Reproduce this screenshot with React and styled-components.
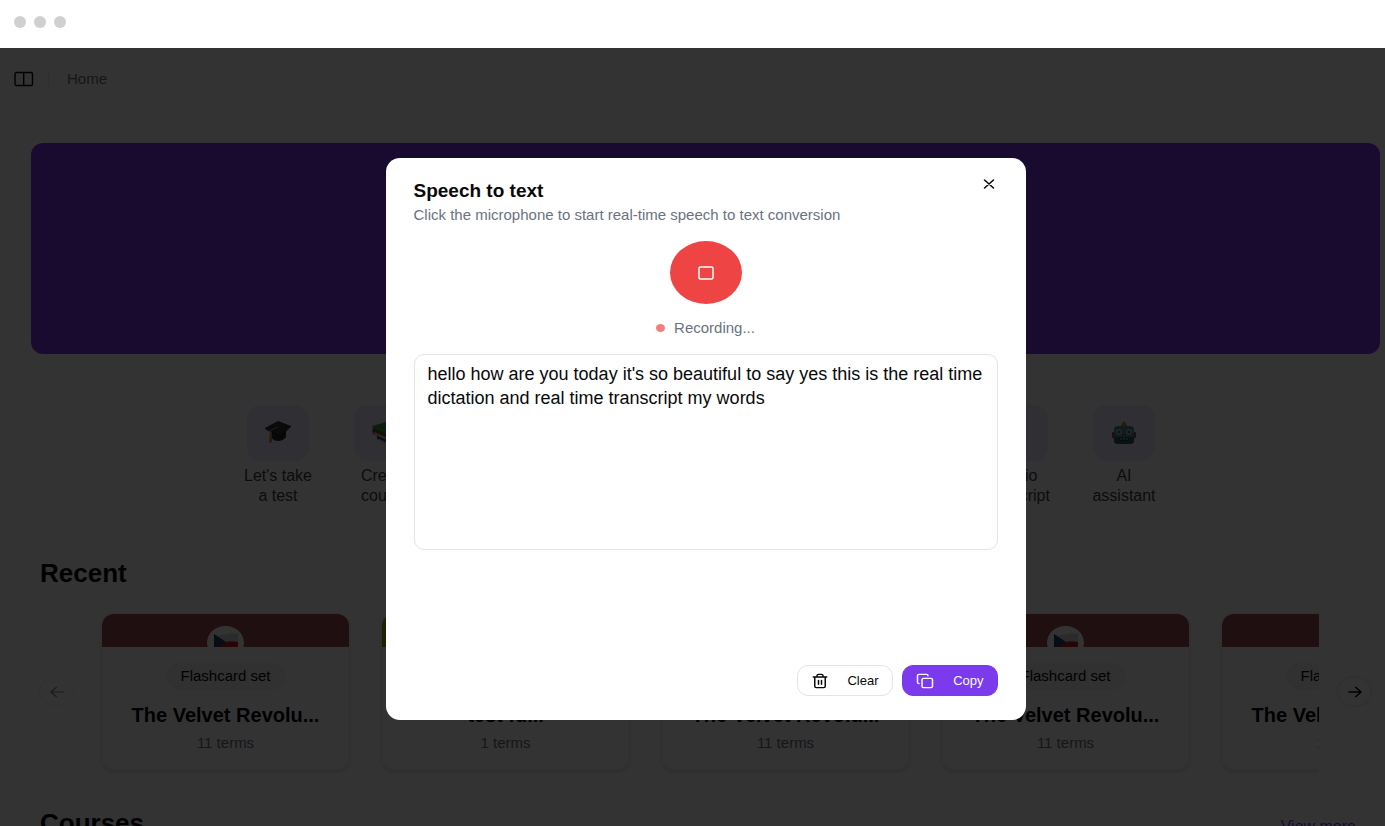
import React from "react";
import styled, { createGlobalStyle } from "styled-components";

const GlobalStyle = createGlobalStyle`
  *, *::before, *::after { box-sizing: border-box; }
  body {
    margin: 0;
    background: #fff;
    color: #09090b;
    font-family: "Liberation Sans", Arial, Helvetica, sans-serif;
    font-size: 15px;
    line-height: 20px;
  }
  h1, h2, h3, p { margin: 0; }
  button, textarea { font-family: inherit; color: inherit; }
`;

const Window = styled.div`
  display: flex;
  flex-direction: column;
  height: 100vh;
  overflow: hidden;
`;

const TitleBar = styled.div`
  display: flex;
  flex: none;
  gap: 8px;
  height: 48px;
  padding: 16px 14px;
`;

const Dot = styled.span`
  width: 12px;
  height: 12px;
  border-radius: 50%;
  background: #d0d0d0;
`;

const Screen = styled.div`
  position: relative;
  flex: 1;
  min-height: 0;
  overflow: hidden;
`;

const Header = styled.header`
  display: flex;
  align-items: center;
  height: 62px;
  padding: 0 14px;
  border-bottom: 1px solid #f4f4f5;
`;

const IconButton = styled.button`
  display: grid;
  place-items: center;
  padding: 0;
  border: 0;
  background: none;
`;

const Divider = styled.span`
  width: 1px;
  height: 16px;
  margin: 0 18px 0 14px;
  background: #e4e4e7;
`;

const Crumb = styled.a`
  color: #71717a;
  text-decoration: none;
`;

const Content = styled.main`
  padding: 33px 5px 0 31px;
`;

const Banner = styled.div`
  height: 211px;
  border-radius: 12px;
  background: #7c3aed;
`;

const Actions = styled.nav`
  display: flex;
  justify-content: center;
  padding: 51px 9px 0 0;
`;

const ActionRow = styled.div`
  display: flex;
  flex: 0 1 922px;
  justify-content: space-between;
`;

const ActionGroup = styled.div`
  display: flex;
  gap: 31px;
`;

const Action = styled.a`
  display: flex;
  flex-direction: column;
  align-items: center;
  gap: 5px;
  color: #3f3f46;
  font-size: 16px;
  text-align: center;
  text-decoration: none;
`;

const Tile = styled.span`
  display: grid;
  place-items: center;
  width: 62px;
  height: 56px;
  border-radius: 14px;
  background: #ede9fe;
`;

const ActionLabel = styled.span`
  width: 76px;
`;

const SectionHead = styled.div`
  display: flex;
  justify-content: space-between;
  align-items: flex-end;
  padding: 0 24px 0 9px;
`;

const SectionTitle = styled.h2`
  font-size: 26px;
  line-height: 32px;
`;

const MoreLink = styled.a`
  color: #7c3aed;
  font-size: 16px;
  line-height: 24px;
  text-decoration: none;
`;

const Section = styled.section`
  padding-top: ${(p) => p.$top}px;
`;

const Carousel = styled.div`
  display: flex;
  align-items: center;
  justify-content: space-between;
  padding: 13px 8px 0;
`;

const ArrowButton = styled.button`
  display: grid;
  flex: none;
  place-items: center;
  width: 35px;
  height: 31px;
  padding: 0;
  border: 1px solid #e4e4e7;
  border-radius: 50%;
  background: #fff;
  opacity: ${(p) => (p.disabled ? 0.5 : 1)};
`;

const Viewport = styled.div`
  display: flex;
  flex: 1;
  gap: 33px;
  margin: 0 18px 0 16px;
  padding: 12px 0 12px 12px;
  overflow: hidden;
`;

const Card = styled.article`
  display: flex;
  flex: none;
  flex-direction: column;
  align-items: center;
  width: 247px;
  height: 155px;
  border-radius: 12px;
  background: #fff;
  box-shadow: 0 0 0 1px #f0f0f2, 0 2px 5px rgba(0, 0, 0, 0.18);
  overflow: hidden;
`;

const CardTop = styled.div`
  display: flex;
  justify-content: center;
  width: 100%;
  height: 33px;
  padding-top: 12px;
  background: ${(p) => p.$color};
  overflow: hidden;
`;

const Avatar = styled.div`
  display: flex;
  flex: none;
  justify-content: center;
  width: 37px;
  height: 33px;
  padding-top: 7px;
  border-radius: 50%;
  background: #fff;
`;

const Badge = styled.span`
  height: 27px;
  margin-top: 16px;
  padding: 0 14px;
  border-radius: 14px;
  background: #f4f4f5;
  font-size: 15px;
  line-height: 26px;
`;

const CardTitle = styled.h3`
  margin-top: 13px;
  font-size: 20px;
  line-height: 24px;
`;

const CardMeta = styled.p`
  margin-top: 6px;
  color: #71717a;
`;

const Overlay = styled.div`
  position: absolute;
  inset: 0;
  display: flex;
  align-items: center;
  justify-content: center;
  padding: 4px 0 0 26px;
  background: rgba(0, 0, 0, 0.8);
`;

const Dialog = styled.div`
  display: flex;
  flex-direction: column;
  width: 640px;
  min-height: 562px;
  padding: 18px 28px 24px;
  border-radius: 14px;
  background: #fff;
`;

const DialogHead = styled.div`
  display: flex;
  justify-content: space-between;
  align-items: flex-start;
`;

const DialogTitle = styled.h1`
  font-size: 19px;
  line-height: 29px;
`;

const Description = styled.p`
  color: #6b7280;
`;

const Recorder = styled.div`
  display: flex;
  flex-direction: column;
  align-items: center;
  gap: 14px;
  padding-top: 16px;
`;

const RecordButton = styled.button`
  display: grid;
  place-items: center;
  width: 72px;
  height: 63px;
  padding: 0;
  border: 0;
  border-radius: 50%;
  background: #ef4444;
`;

const Status = styled.p`
  display: flex;
  align-items: center;
  gap: 9px;
  color: #6b7280;
`;

const Pulse = styled.span`
  width: 9px;
  height: 8px;
  border-radius: 50%;
  background: #f47c7c;
`;

const Transcript = styled.textarea`
  display: block;
  width: 100%;
  height: 196px;
  margin-top: 16px;
  padding: 7px 12px 8px 13px;
  border: 1px solid #e4e4e7;
  border-radius: 10px;
  outline: 0;
  background: #fff;
  font-size: 18px;
  line-height: 24px;
  resize: none;
  overflow: hidden;
`;

const DialogActions = styled.div`
  display: flex;
  justify-content: flex-end;
  gap: 9px;
  margin-top: auto;
`;

const ActionButton = styled.button`
  display: flex;
  align-items: center;
  justify-content: space-between;
  width: 96px;
  height: 31px;
  padding: 0 13px;
  border: 1px solid ${(p) => (p.$primary ? "#7c3aed" : "#e4e4e7")};
  border-radius: 11px;
  background: ${(p) => (p.$primary ? "#7c3aed" : "#fff")};
  color: ${(p) => (p.$primary ? "#fafafa" : "#09090b")};
  font-size: 13px;
`;

function LineIcon({ width, height, stroke = 2, children }) {
  return (
    <svg width={width} height={height} viewBox="0 0 24 24" preserveAspectRatio="none" fill="none"
      stroke="currentColor" strokeWidth={stroke} strokeLinecap="round" strokeLinejoin="round" aria-hidden="true">
      {children}
    </svg>
  );
}

const GraduationCap = () => (
  <svg width="26" height="24" viewBox="0 0 26 24" aria-hidden="true">
    <path d="M7 10v7c2 4 11 4 14-1v-6z" fill="#26282b" />
    <path d="M0 7 13 0l13 5-11 10z" fill="#303338" />
    <path d="M0 7l15 8 11-10v1L15 16 0 8z" fill="#111" />
    <path d="M13 6 6 9l-1 4" fill="none" stroke="#c98a2a" strokeWidth="1" />
    <path d="M5 12h2v9l-3 1z" fill="#c98a2a" />
  </svg>
);

const Books = () => (
  <svg width="27" height="23" viewBox="0 0 27 23" aria-hidden="true">
    <path d="M5 13l12-4 9 6-13 7-8-5z" fill="#2f4f90" />
    <path d="M7 17l6 3 13-6v2l-13 6-7-4z" fill="#d8d8d8" />
    <path d="M0 8l15-5 10 6-12 8L1 12z" fill="#b8362c" />
    <path d="M2 10l11 5 12-6v2l-12 6-11-5z" fill="#d8d2c6" />
    <path d="M0 4l14-4 11 5-12 7L1 7z" fill="#3d9a3c" />
    <path d="M1 6l12 5v2L1 8z" fill="#1e6c28" />
  </svg>
);

const Robot = () => (
  <svg width="26" height="24" viewBox="0 0 26 24" aria-hidden="true">
    <path d="M10 5a3 3 0 0 1 6 0z" fill="#c08a2a" />
    <circle cx="13" cy="2" r="1.6" fill="#c08a2a" />
    <rect x="1" y="11" width="3" height="6" rx="1" fill="#a0433e" />
    <rect x="22" y="11" width="3" height="6" rx="1" fill="#a0433e" />
    <rect x="3" y="5" width="20" height="18" rx="4" fill="#5a8488" />
    <path d="M3 16h20v3q0 4-4 4H7q-4 0-4-4z" fill="#2c5a5e" />
    <circle cx="8" cy="11" r="3" fill="#98ccd0" />
    <circle cx="18" cy="11" r="3" fill="#98ccd0" />
    <circle cx="8" cy="11" r="1.6" fill="#2a6a70" />
    <circle cx="18" cy="11" r="1.6" fill="#2a6a70" />
    <path d="M13 12l2 3h-4z" fill="#c4503e" />
    <path d="M8 17h10v3H8z" fill="#163c40" />
    <path d="M10 17v2M13 17v2M16 17v2" stroke="#b8d0d2" strokeWidth="1" />
  </svg>
);

const CzechFlag = () => (
  <svg width="26" height="17" viewBox="0 0 26 17" aria-hidden="true">
    <path d="M1 1c4 2 8 1 12 0s8-1 12 0v8H1z" fill="#d8d8d8" />
    <path d="M1 9h12c4-1 8-1 12 0v7c-4-1-8-1-12 0s-8 2-12 0z" fill="#b82222" />
    <path d="M1 1l12 8L1 16z" fill="#1f4070" />
  </svg>
);

const actionGroups = [
  [
    { label: "Let's take a test", icon: <GraduationCap /> },
    { label: "Create course", icon: <Books /> },
  ],
  [
    { label: "Audio transcript" },
    { label: "AI assistant", icon: <Robot /> },
  ],
];

const sets = [
  { title: "The Velvet Revolu...", terms: 11, color: "#9b4a52", flag: true },
  { title: "test fu...", terms: 1, color: "#84a800" },
  { title: "The Velvet Revolu...", terms: 11, color: "#9b4a52", flag: true },
  { title: "The Velvet Revolu...", terms: 11, color: "#9b4a52", flag: true },
  { title: "The Velvet Revolu...", terms: 11, color: "#9b4a52", flag: true },
];

export default function App() {
  return (
    <Window>
      <GlobalStyle />
      <TitleBar><Dot /><Dot /><Dot /></TitleBar>
      <Screen>
        <Header>
          <IconButton aria-label="Toggle sidebar">
            <svg width="20" height="16" viewBox="0 0 20 16" fill="none" stroke="currentColor" strokeWidth="1.400" aria-hidden="true">
              <rect x="1" y="1.500" width="17.500" height="13" rx="1.500" />
              <path d="M9.700 1.500v13" />
            </svg>
          </IconButton>
          <Divider />
          <Crumb href="#home">Home</Crumb>
        </Header>
        <Content>
          <Banner />
          <Actions>
            <ActionRow>
              {actionGroups.map((group, i) => (
                <ActionGroup key={i}>
                  {group.map((a) => (
                    <Action key={a.label} href="#tool">
                      <Tile>{a.icon}</Tile>
                      <ActionLabel>{a.label}</ActionLabel>
                    </Action>
                  ))}
                </ActionGroup>
              ))}
            </ActionRow>
          </Actions>
          <Section $top={51}>
            <SectionHead><SectionTitle>Recent</SectionTitle></SectionHead>
            <Carousel>
              <ArrowButton disabled aria-label="Previous">
                <LineIcon width={18} height={16} stroke={1.6}><path d="M11 19l-7-7 7-7M21 12H4" /></LineIcon>
              </ArrowButton>
              <Viewport>
                {sets.map((s, i) => (
                  <Card key={i}>
                    <CardTop $color={s.color}>{s.flag && <Avatar><CzechFlag /></Avatar>}</CardTop>
                    <Badge>Flashcard set</Badge>
                    <CardTitle>{s.title}</CardTitle>
                    <CardMeta>{s.terms} terms</CardMeta>
                  </Card>
                ))}
              </Viewport>
              <ArrowButton aria-label="Next">
                <LineIcon width={18} height={16} stroke={2}><path d="M13 5l7 7-7 7M4 12h16" /></LineIcon>
              </ArrowButton>
            </Carousel>
          </Section>
          <Section $top={26}>
            <SectionHead>
              <SectionTitle>Courses</SectionTitle>
              <MoreLink href="#courses">View more</MoreLink>
            </SectionHead>
          </Section>
        </Content>
        <Overlay>
          <Dialog role="dialog" aria-modal="true" aria-labelledby="dialog-title">
            <DialogHead>
              <DialogTitle id="dialog-title">Speech to text</DialogTitle>
              <IconButton aria-label="Close">
                <LineIcon width={18} height={16}><path d="M18 6 6 18M6 6l12 12" /></LineIcon>
              </IconButton>
            </DialogHead>
            <Description>Click the microphone to start real-time speech to text conversion</Description>
            <Recorder>
              <RecordButton aria-label="Stop recording">
                <svg width="16" height="14" viewBox="0 0 16 14" fill="none" stroke="#fff" strokeWidth="1.500" aria-hidden="true">
                  <rect x="1" y="1" width="14" height="12" rx="1.500" />
                </svg>
              </RecordButton>
              <Status><Pulse />Recording...</Status>
            </Recorder>
            <Transcript
              aria-label="Transcript"
              spellCheck={false}
              defaultValue="hello how are you today it's so beautiful to say yes this is the real time dictation and real time transcript my words"
            />
            <DialogActions>
              <ActionButton>
                <LineIcon width={18} height={16}>
                  <path d="M3 6h18M19 6v14c0 1-1 2-2 2H7c-1 0-2-1-2-2V6M8 6V4c0-1 1-2 2-2h4c1 0 2 1 2 2v2M10 11v6M14 11v6" />
                </LineIcon>
                Clear
              </ActionButton>
              <ActionButton $primary>
                <LineIcon width={18} height={16}>
                  <rect x="8" y="8" width="14" height="14" rx="2" />
                  <path d="M4 16c-1.100 0-2-.9-2-2V4c0-1.100.9-2 2-2h10c1.100 0 2 .9 2 2" />
                </LineIcon>
                Copy
              </ActionButton>
            </DialogActions>
          </Dialog>
        </Overlay>
      </Screen>
    </Window>
  );
}
